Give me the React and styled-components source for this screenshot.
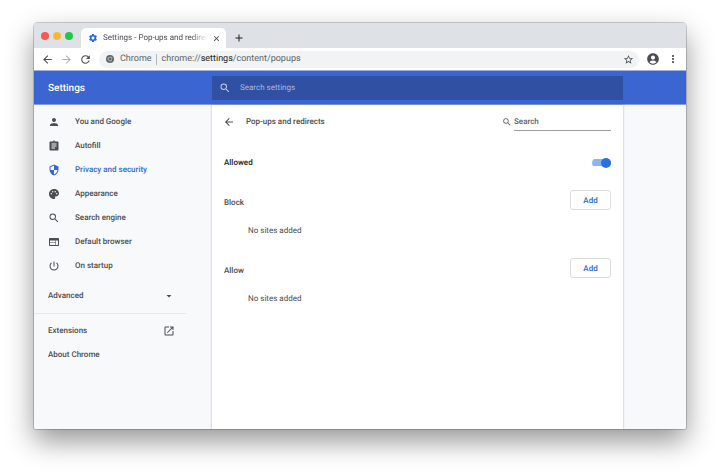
import React, {useState} from "react";
import styled, {createGlobalStyle} from 'styled-components'
import {
    MdPerson, MdAssignment, MdSecurity, MdPalette, MdSearch, MdWeb, MdPowerSettingsNew,
    MdArrowDropDown, MdOpenInNew, MdSettings, MdClose, MdAdd, MdArrowBack, MdArrowForward,
    MdRefresh, MdStarBorder, MdAccountCircle, MdMoreVert
} from 'react-icons/md'

const menuItems = [
    {label: 'You and Google', icon: MdPerson},
    {label: 'Autofill', icon: MdAssignment},
    {label: 'Privacy and security', icon: MdSecurity, active: true},
    {label: 'Appearance', icon: MdPalette},
    {label: 'Search engine', icon: MdSearch},
    {label: 'Default browser', icon: MdWeb},
    {label: 'On startup', icon: MdPowerSettingsNew},
]

function ChromeMark(){
    return (
        <svg width="8" height="8" viewBox="0 0 24 24" aria-hidden="true">
            <circle cx="12" cy="12" r="12" fill="#5f6368"/>
            <circle cx="12" cy="12" r="5.6" fill="none" stroke="#dfe1e3" strokeWidth="1.8"/>
            <path d="M12 6.4h11M7.2 14.8L1.6 5.6M16.8 14.8L11.4 24" stroke="#b4b7ba" strokeWidth="1.4"/>
        </svg>
    )
}

function TabStrip(){
    return (
        <StyleTabStrip>
            <Lights>
                <Light $color="#fc5650" aria-label="Close window"/>
                <Light $color="#fdb738" aria-label="Minimize window"/>
                <Light $color="#1fc845" aria-label="Zoom window"/>
            </Lights>
            <Tab>
                <MdSettings size={10} color="#1a68e5"/>
                <TabTitle>Settings - Pop-ups and redirects</TabTitle>
                <IconButton $color="#3c4043" aria-label="Close tab"><MdClose size={9}/></IconButton>
            </Tab>
            <IconButton $color="#202124" aria-label="New tab"><MdAdd size={12}/></IconButton>
        </StyleTabStrip>
    )
}

function Toolbar(){
    return (
        <StyleToolbar>
            <NavButtons>
                <IconButton aria-label="Back"><MdArrowBack size={13}/></IconButton>
                <IconButton $color="#b0b3b6" aria-label="Forward"><MdArrowForward size={13}/></IconButton>
                <IconButton aria-label="Reload"><MdRefresh size={13}/></IconButton>
            </NavButtons>
            <Omnibox>
                <ChromeMark/>
                <Origin>Chrome</Origin>
                <Url role="textbox" aria-label="Address" contentEditable suppressContentEditableWarning spellCheck={false}>
                    chrome://<b>settings</b>/content/popups
                </Url>
                <IconButton aria-label="Bookmark"><MdStarBorder size={11}/></IconButton>
            </Omnibox>
            <IconButton aria-label="Profile"><MdAccountCircle size={14}/></IconButton>
            <IconButton aria-label="Menu"><MdMoreVert size={12}/></IconButton>
        </StyleToolbar>
    )
}

function Sidebar(){
    return (
        <StyleSidebar>
            {menuItems.map(({label, icon: Icon, active}) => (
                <MenuLink key={label} href="#" $active={active}>
                    <Icon size={12}/>
                    {label}
                </MenuLink>
            ))}
            <Advanced>
                Advanced
                <MdArrowDropDown size={12}/>
            </Advanced>
            <Divider/>
            <FooterLink href="#">
                Extensions
                <MdOpenInNew size={12}/>
            </FooterLink>
            <FooterLink href="#">About Chrome</FooterLink>
        </StyleSidebar>
    )
}

function SiteList({title}){
    return (
        <section>
            <SiteListTop>
                <h2>{title}</h2>
                <AddButton>Add</AddButton>
            </SiteListTop>
            <Empty>No sites added</Empty>
        </section>
    )
}

function Popups(){
    const [allowed, setAllowed] = useState(true)
    return (
        <Content>
            <ContentTop>
                <IconButton aria-label="Back to content settings"><MdArrowBack size={12}/></IconButton>
                <h1>Pop-ups and redirects</h1>
                <label htmlFor="site-search"><MdSearch size={10}/></label>
                <SiteSearch id="site-search" type="text" aria-label="Search" placeholder="Search"/>
            </ContentTop>
            <AllowedRow>
                <label htmlFor="allowed">Allowed</label>
                <Toggle
                    id="allowed"
                    type="checkbox"
                    checked={allowed}
                    onChange={() => setAllowed((current) => !current)}
                />
            </AllowedRow>
            <Lists>
                <SiteList title="Block"/>
                <SiteList title="Allow"/>
            </Lists>
        </Content>
    )
}

function App(){
    return (
        <Desktop>
            <GlobalStyle/>
            <Window>
                <TabStrip/>
                <Toolbar/>
                <Header>
                    <HeaderTitle>Settings</HeaderTitle>
                    <HeaderSearch>
                        <MdSearch size={12}/>
                        <input type="text" aria-label="Search settings" placeholder="Search settings"/>
                    </HeaderSearch>
                </Header>
                <Body>
                    <Sidebar/>
                    <Popups/>
                </Body>
            </Window>
        </Desktop>
    )
}
export default App

const GlobalStyle = createGlobalStyle`
    * {
        box-sizing: border-box;
    }

    body {
        margin: 0;
        background: white;
        color: #4a4d51;
        font: 500 8px/12px Roboto, sans-serif;
        text-rendering: geometricPrecision;
    }

    button, input {
        margin: 0;
        padding: 0;
        border: 0;
        background: none;
        color: inherit;
        font: inherit;
        text-rendering: inherit;
        outline: none;
    }

    h1, h2, p {
        margin: 0;
        font: inherit;
    }

    svg {
        display: block;
        flex: none;
    }

    a {
        color: inherit;
        text-decoration: none;
    }
`

const Desktop = styled.div`
    display: flex;
    min-height: 100vh;
    padding: 23px 34px 45px;
`

const Window = styled.div`
    flex: 1;
    min-width: 0;
    display: flex;
    flex-direction: column;
    overflow: hidden;
    border-radius: 4px 4px 2px 2px;
    box-shadow: 0 0 0 1px rgba(0, 0, 0, 0.18), 0 12px 28px rgba(0, 0, 0, 0.42);
`

const IconButton = styled.button`
    display: flex;
    align-items: center;
    justify-content: center;
    color: ${({$color}) => $color || '#4a4d51'};
`

const StyleTabStrip = styled.div`
    display: flex;
    align-items: flex-end;
    height: 25px;
    background: #dee1e6;

    > button {
        height: 20px;
        margin-left: 7px;
    }
`

const Lights = styled.div`
    display: flex;
    align-items: center;
    gap: 4px;
    height: 25px;
    padding: 0 8px 0 7px;
`

const Light = styled.button`
    width: 8px;
    height: 8px;
    border-radius: 50%;
    background: ${({$color}) => $color};
`

const Tab = styled.div`
    display: flex;
    align-items: center;
    gap: 5px;
    width: 145px;
    height: 20px;
    padding: 0 5px 0 7px;
    border-radius: 5px 5px 0 0;
    background: white;
`

const TabTitle = styled.span`
    flex: 1;
    min-width: 0;
    overflow: hidden;
    white-space: nowrap;
    font-weight: 400;
    line-height: 14px;
    mask-image: linear-gradient(to right, black 85%, transparent);
`

const StyleToolbar = styled.div`
    display: flex;
    align-items: center;
    height: 22px;
    padding: 0 7px;
    gap: 7px;
    background: white;
`

const NavButtons = styled.div`
    display: flex;
    gap: 6px;
`

const Omnibox = styled.div`
    flex: 1;
    display: flex;
    align-items: center;
    height: 17px;
    padding: 0 5px 0 7px;
    border-radius: 9px;
    background: #f1f3f4;
    color: #5f6368;
    font-size: 9px;
    font-weight: 400;
    line-height: 11px;
`

const Origin = styled.span`
    margin-left: 6px;
    padding-right: 4px;
    border-right: 1px solid #b5b8bb;
`

const Url = styled.div`
    flex: 1;
    padding-left: 5px;
    outline: none;

    b {
        font-weight: 400;
        color: #202124;
    }
`

const Header = styled.header`
    display: grid;
    grid-template-columns: 178px minmax(0, 1fr) 63px;
    align-items: center;
    height: 35px;
    border-top: 1px solid #9fb2e8;
    border-bottom: 1px solid #829be6;
    background: #3b65d1;
    color: white;
`

const HeaderTitle = styled.div`
    padding: 2px 0 0 14px;
    font-size: 10px;
`

const HeaderSearch = styled.label`
    display: flex;
    align-items: center;
    gap: 9px;
    height: 24px;
    padding: 0 7px;
    background: #2f50a3;
    color: #c3cde6;

    input {
        flex: 1;
        min-width: 0;
        font-weight: 400;
    }

    input::placeholder {
        color: #aab8dc;
        opacity: 1;
    }
`

const Body = styled.div`
    flex: 1;
    display: grid;
    grid-template-columns: 178px minmax(0, 1fr) 63px;
    background: #f8f9fb;
`

const StyleSidebar = styled.nav`
    padding-top: 5px;
`

const MenuLink = styled.a`
    display: flex;
    align-items: center;
    gap: 15px;
    height: 24px;
    padding-left: 14px;
    color: ${({$active}) => $active ? '#3367d6' : '#4a4d51'};
`

const Advanced = styled.button`
    display: flex;
    align-items: center;
    justify-content: space-between;
    width: 141px;
    height: 24px;
    margin: 6px 0 5px;
    padding-left: 14px;
`

const Divider = styled.hr`
    width: 152px;
    margin: 0 0 5px;
    border: 0;
    border-top: 1px solid #e6e8ea;
`

const FooterLink = styled.a`
    display: flex;
    align-items: center;
    justify-content: space-between;
    width: 141px;
    height: 24px;
    padding-left: 14px;
`

const Content = styled.main`
    padding: 0 12px 12px;
    background: white;
    box-shadow: 0 0 2px rgba(60, 64, 67, 0.4);
`

const ContentTop = styled.div`
    display: flex;
    align-items: center;
    height: 33px;

    button {
        margin-left: -1px;
    }

    h1 {
        flex: 1;
        margin-left: 11px;
    }

    label {
        margin-right: 2px;
        color: #5f6368;
    }
`

const SiteSearch = styled.input`
    width: 97px;
    height: 18px;
    border-bottom: 1px solid #9a9da0;

    &::placeholder {
        color: #5f6368;
        opacity: 1;
    }
`

const AllowedRow = styled.div`
    display: flex;
    align-items: center;
    justify-content: space-between;
    height: 25px;
    margin: 12px 0 15px;
    color: #202124;
`

const Toggle = styled.input`
    appearance: none;
    display: flex;
    align-items: center;
    justify-content: ${({checked}) => checked ? 'flex-end' : 'flex-start'};
    width: 19px;
    height: 10px;
    background: linear-gradient(${({checked}) => checked ? '#8fb4f2, #8fb4f2' : '#bdc1c6, #bdc1c6'}) center / 100% 7px no-repeat;
    border-radius: 5px;

    &::before {
        content: '';
        width: 10px;
        height: 10px;
        border-radius: 50%;
        background: ${({checked}) => checked ? '#2a6fe6' : 'white'};
    }
`

const Lists = styled.div`
    display: grid;
    gap: 19px;
`

const SiteListTop = styled.div`
    display: flex;
    align-items: flex-end;
    justify-content: space-between;

    h2 {
        line-height: 14px;
    }
`

const AddButton = styled.button`
    width: 41px;
    height: 20px;
    padding-top: 1px;
    border: 1px solid #dadce0;
    border-radius: 3px;
    color: #2468e0;
`

const Empty = styled.p`
    margin-top: 13px;
    padding-left: 24px;
    font-weight: 400;
    line-height: 16px;
`
